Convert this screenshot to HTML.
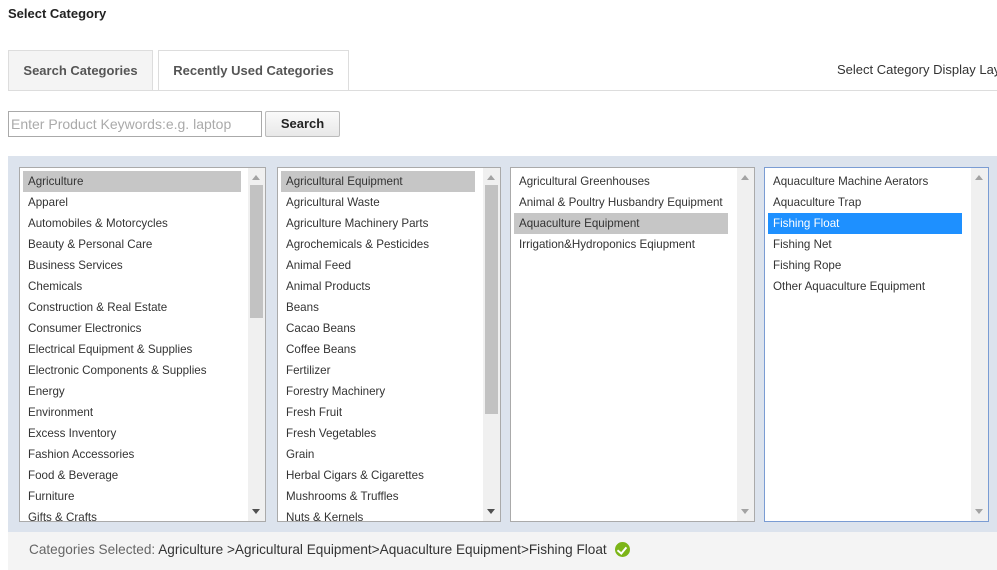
<!DOCTYPE html>
<html><head><style>
*{box-sizing:border-box;margin:0;padding:0}
body{width:997px;height:570px;overflow:hidden;background:#fff;font-family:"Liberation Sans",Arial,sans-serif;color:#333;position:relative}
.abs{position:absolute}
.title{left:8px;top:6px;font-size:13px;font-weight:bold;color:#222}
.tab{top:50px;height:41px;border:1px solid #ddd;border-bottom:none;font-size:13px;font-weight:bold;color:#555;line-height:40px;text-align:center}
.tabline{left:8px;top:90px;width:989px;height:1px;background:#ddd}
.lay{left:837px;top:62px;font-size:13px;color:#333;white-space:nowrap}
.inp{left:8px;top:111px;width:254px;height:26px;border:1px solid #aaa;font-size:14px;color:#aaa;padding:4px 2px;white-space:nowrap}
.btn{left:265px;top:111px;width:75px;height:26px;border:1px solid #bbb;border-radius:2px;background:linear-gradient(#fafafa,#e8e8e8);font-size:13px;font-weight:bold;color:#222;text-align:center;line-height:24px}
.panel{left:8px;top:156px;width:989px;height:376px;background:#dce3ed}
.foot{left:8px;top:532px;width:989px;height:38px;background:#f4f4f4;font-size:13.6px;color:#666;padding:10px 21px;white-space:nowrap}
.foot b{font-weight:normal;color:#333}
.chk{display:inline-block;width:15px;height:15px;border-radius:50%;background:#7cb518;vertical-align:-3px;margin-left:8px;position:relative}
.chk:after{content:"";position:absolute;left:4px;top:3px;width:4px;height:7px;border:solid #fff;border-width:0 2px 2px 0;transform:rotate(40deg)}
.box{top:167px;height:355px;background:#fff;border:1px solid #aaa;overflow:hidden}
.box.sel{border-color:#7a9cd3}
.items{position:absolute;left:3px;top:3px}
.it{height:21px;line-height:21px;font-size:11.6px;padding-left:5px;color:#333;white-space:nowrap}
.it.g{background:#c6c6c6}
.it.b{background:#1e90ff;color:#fff}
.sb{position:absolute;right:0;top:0;width:17px;height:100%;background:#f0f0f0}
.sb .up,.sb .dn{position:absolute;left:4px;width:0;height:0;border-left:4px solid transparent;border-right:4px solid transparent}
.sb .up{top:7px;border-bottom:5px solid #a3a3a3}
.sb .dn{bottom:7px;border-top:5px solid #505050}
.sb .th{position:absolute;left:2px;width:13px;background:#c2c2c2}
</style></head><body>
<div class="abs title">Select Category</div>
<div class="abs tab" style="left:8px;width:145px;background:#f4f4f4">Search Categories</div>
<div class="abs tab" style="left:158px;width:191px;background:#fff">Recently Used Categories</div>
<div class="abs tabline"></div>
<div class="abs lay">Select Category Display Lay</div>
<div class="abs inp">Enter Product Keywords:e.g. laptop</div>
<div class="abs btn">Search</div>
<div class="abs panel"></div>

<div class="abs box" style="left:19px;width:247px">
<div class="items" style="width:218px">
<div class="it g">Agriculture</div><div class="it">Apparel</div><div class="it">Automobiles &amp; Motorcycles</div><div class="it">Beauty &amp; Personal Care</div><div class="it">Business Services</div><div class="it">Chemicals</div><div class="it">Construction &amp; Real Estate</div><div class="it">Consumer Electronics</div><div class="it">Electrical Equipment &amp; Supplies</div><div class="it">Electronic Components &amp; Supplies</div><div class="it">Energy</div><div class="it">Environment</div><div class="it">Excess Inventory</div><div class="it">Fashion Accessories</div><div class="it">Food &amp; Beverage</div><div class="it">Furniture</div><div class="it">Gifts &amp; Crafts</div>
</div>
<div class="sb"><div class="up"></div><div class="th" style="top:17px;height:133px"></div><div class="dn"></div></div>
</div>

<div class="abs box" style="left:277px;width:224px">
<div class="items" style="width:194px">
<div class="it g">Agricultural Equipment</div><div class="it">Agricultural Waste</div><div class="it">Agriculture Machinery Parts</div><div class="it">Agrochemicals &amp; Pesticides</div><div class="it">Animal Feed</div><div class="it">Animal Products</div><div class="it">Beans</div><div class="it">Cacao Beans</div><div class="it">Coffee Beans</div><div class="it">Fertilizer</div><div class="it">Forestry Machinery</div><div class="it">Fresh Fruit</div><div class="it">Fresh Vegetables</div><div class="it">Grain</div><div class="it">Herbal Cigars &amp; Cigarettes</div><div class="it">Mushrooms &amp; Truffles</div><div class="it">Nuts &amp; Kernels</div>
</div>
<div class="sb"><div class="up"></div><div class="th" style="top:17px;height:229px"></div><div class="dn"></div></div>
</div>

<div class="abs box" style="left:510px;width:245px">
<div class="items" style="width:214px">
<div class="it">Agricultural Greenhouses</div><div class="it">Animal &amp; Poultry Husbandry Equipment</div><div class="it g">Aquaculture Equipment</div><div class="it">Irrigation&amp;Hydroponics Eqiupment</div>
</div>
<div class="sb"><div class="up"></div><div class="dn" style="border-top-color:#a3a3a3"></div></div>
</div>

<div class="abs box sel" style="left:764px;width:225px">
<div class="items" style="width:194px">
<div class="it">Aquaculture Machine Aerators</div><div class="it">Aquaculture Trap</div><div class="it b">Fishing Float</div><div class="it">Fishing Net</div><div class="it">Fishing Rope</div><div class="it">Other Aquaculture Equipment</div>
</div>
<div class="sb"><div class="up"></div><div class="dn" style="border-top-color:#a3a3a3"></div></div>
</div>

<div class="abs foot">Categories Selected: <b>Agriculture &gt;Agricultural Equipment&gt;Aquaculture Equipment&gt;Fishing Float</b><span class="chk"></span></div>
</body></html>
